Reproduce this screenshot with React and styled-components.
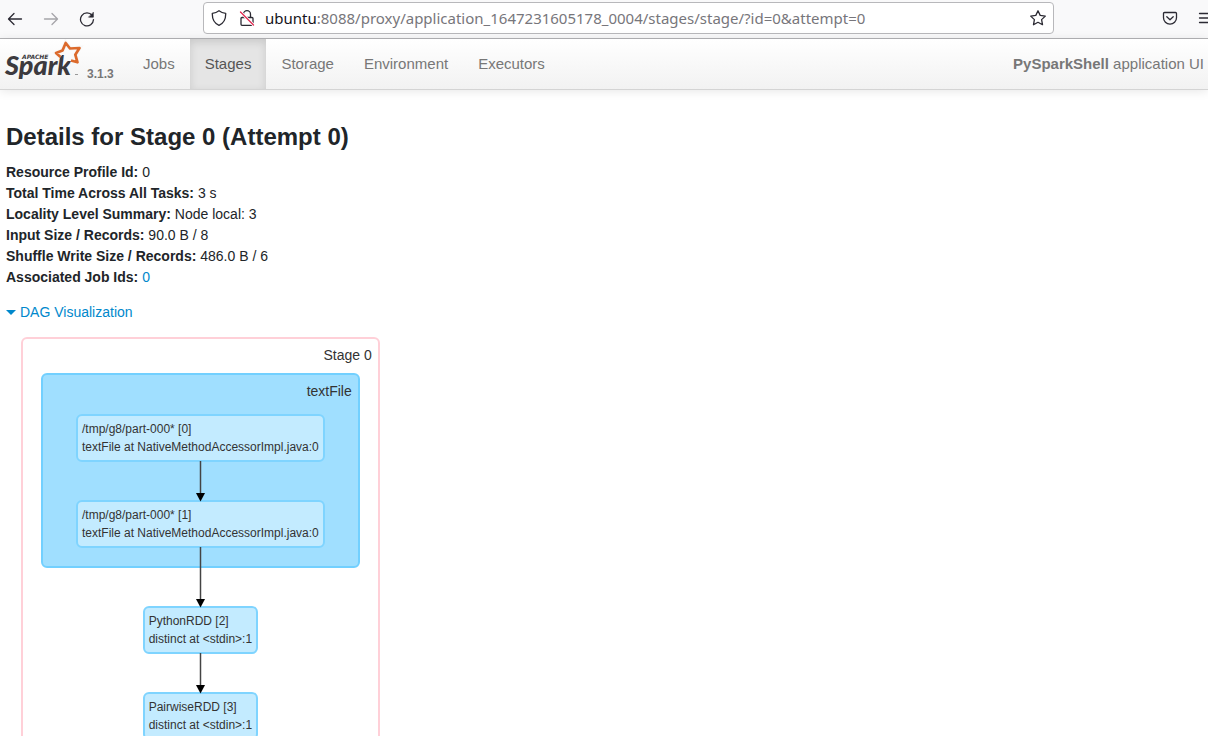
import React from "react";
import styled, { createGlobalStyle, css } from "styled-components";

const GlobalStyle = createGlobalStyle`
  * { box-sizing: border-box; }
  html, body, #root { height: 100%; margin: 0; }
  body {
    background: #fff;
    color: #212529;
    font-family: "Liberation Sans", Arial, sans-serif;
    font-size: 14px;
    line-height: 21px;
  }
`;

const Window = styled.div`
  display: flex;
  flex-direction: column;
  height: 100vh;
`;

/* ---------- browser toolbar ---------- */

const Toolbar = styled.header`
  display: flex;
  flex: none;
  align-items: center;
  height: 39px;
  background: #f9f9fa;
  border-bottom: 1px solid #b4b4b7;
  overflow: hidden;
`;

const ToolGroup = styled.div`
  display: flex;
  align-items: center;
  flex: none;
  gap: ${(p) => p.$gap || 16}px;
`;

const BackForward = styled(ToolGroup)`
  padding-left: 5px;
  width: 203px;
`;

const MenuTools = styled(ToolGroup)`
  width: 154px;
  padding-left: 106px;
`;

const IconButton = styled.button`
  display: flex;
  flex: none;
  align-items: center;
  justify-content: center;
  width: 20px;
  height: 20px;
  padding: 0;
  border: 0;
  background: none;
  color: #2b2a33;
  opacity: ${(p) => (p.disabled ? 0.4 : 1)};
`;

const AddressBar = styled.form`
  display: flex;
  flex: 1;
  align-items: center;
  gap: 8px;
  min-width: 0;
  height: 32px;
  margin-bottom: 2px;
  padding: 0 5px;
  background: #fff;
  border: 1px solid #b8b8bb;
  border-radius: 4px;
`;

const Address = styled.label`
  display: flex;
  flex: 1;
  min-width: 0;
  color: #15141a;
  font-family: "Noto Sans", sans-serif;
  font-size: 15px;
  line-height: 24px;
`;

const AddressInput = styled.input`
  flex: 1;
  min-width: 0;
  padding: 0;
  border: 0;
  outline: 0;
  background: none;
  color: #77767b;
  font: inherit;
`;

/* ---------- Spark navigation ---------- */

const Navbar = styled.nav`
  display: flex;
  flex: none;
  position: relative;
  height: 51px;
  background: linear-gradient(#fff, #f2f2f2);
  border-bottom: 1px solid #d4d4d4;
  box-shadow: 0 1px 10px rgba(0, 0, 0, 0.1);
  font-size: 15px;
`;

const Brand = styled.a`
  display: flex;
  align-items: flex-start;
  gap: 3px;
  width: 128px;
  padding-left: 4px;
  color: #777;
  text-decoration: none;
`;

const Version = styled.span`
  margin-top: 25px;
  font-size: 12px;
  font-weight: bold;
`;

const NavList = styled.ul`
  display: flex;
  margin: 0;
  padding: 0;
  list-style: none;
`;

const NavLink = styled.a`
  display: block;
  height: 50px;
  padding: 0 15px;
  color: #777;
  line-height: 50px;
  text-decoration: none;
  ${(p) =>
    p.$active &&
    css`
      background: #e5e5e5;
      color: #555;
      box-shadow: inset 0 3px 8px rgba(0, 0, 0, 0.125);
    `}
`;

const AppName = styled.p`
  margin: 0 4px 0 auto;
  color: #777;
  line-height: 50px;
  white-space: nowrap;
`;

/* ---------- page ---------- */

const Page = styled.main`
  flex: 1;
  min-height: 0;
  overflow: auto;
  scrollbar-width: none;
  padding: 32px 6px 0;
`;

const Title = styled.h1`
  margin: 0 0 10px;
  font-size: 24px;
  line-height: 30px;
`;

const Summary = styled.ul`
  margin: 0 0 14px;
  padding: 0;
  list-style: none;
`;

const Link = styled.a`
  color: #0088cc;
  text-decoration: none;
`;

const Toggle = styled.button`
  display: flex;
  align-items: center;
  gap: 4px;
  padding: 0;
  border: 0;
  background: none;
  color: #0088cc;
  font: inherit;
`;

const Caret = styled.span`
  border: 5px solid transparent;
  border-top-color: currentColor;
  border-bottom: 0;
`;

/* ---------- DAG ---------- */

const Stage = styled.section`
  display: flex;
  flex-direction: column;
  align-items: center;
  width: max-content;
  margin: 14px 0 16px 15px;
  padding: 6px 18px 20px;
  border: 2px solid #ffd0d8;
  border-radius: 6px;
  color: #333;
`;

const ClusterLabel = styled.h2`
  align-self: flex-end;
  margin: ${(p) => p.$margin};
  font-size: 14px;
  font-weight: normal;
  line-height: 21px;
`;

const Cluster = styled.div`
  display: flex;
  flex-direction: column;
  align-items: center;
  padding: 6px 33px 18px;
  background: #a0dfff;
  border: 2px solid #72d0ff;
  border-radius: 6px;
`;

const Node = styled.div`
  padding: 4px;
  background: #c3ebff;
  border: 2px solid #7fd4ff;
  border-radius: 6px;
  font-size: 12px;
  line-height: 18px;
  white-space: nowrap;
`;

const EdgeSvg = styled.svg`
  display: block;
  position: relative;
  overflow: visible;
  margin-top: -${(p) => p.$overlap || 0}px;
`;

function Edge({ length = 38, overlap = 0 }) {
  return (
    <EdgeSvg width="11" height={length} $overlap={overlap} aria-hidden="true">
      <path d={`M5.5 -1V${length - 4}`} stroke="#444" strokeWidth="1.5" />
      <path d={`M1 ${length - 7}h9l-4.5 8.500z`} fill="#000" />
    </EdgeSvg>
  );
}

function RddNode({ name, call }) {
  return (
    <Node>
      <div>{name}</div>
      <div>{call}</div>
    </Node>
  );
}

/* ---------- icons ---------- */

const Icon = ({ children, size = 16 }) => (
  <svg
    width={size}
    height={size}
    viewBox="0 0 16 16"
    fill="none"
    stroke="currentColor"
    strokeWidth="1.3"
    strokeLinecap="round"
    strokeLinejoin="round"
    aria-hidden="true"
  >
    {children}
  </svg>
);

const SparkLogo = () => (
  <svg width="80" height="44" viewBox="0 0 80 44" role="img" aria-label="Apache Spark">
    <text x="1" y="36" fontFamily="Lato, sans-serif" fontSize="27" fontWeight="900" fontStyle="italic" fill="#3c3a3e">
      Spark
    </text>
    <text x="18" y="20" fontFamily="DejaVu Sans, sans-serif" fontSize="6" fontWeight="700" fontStyle="italic" fill="#3c3a3e">
      APACHE
    </text>
    <path
      d="M56.500 18L52 14L58.500 11.500L61.700 4L66 9.500L75.500 9L71.300 15.700L73.500 23.300L67 21.500"
      fill="none"
      stroke="#f8f8f8"
      strokeWidth="4.500"
    />
    <path
      d="M56.500 18L52 14L58.500 11.500L61.700 4L66 9.500L75.500 9L71.300 15.700L73.500 23.300L67 21.500"
      fill="none"
      stroke="#dc6a2c"
      strokeWidth="2.700"
      strokeLinejoin="round"
    />
    <path d="M71 35.500h3" stroke="#999" />
  </svg>
);

const facts = [
  ["Resource Profile Id:", "0"],
  ["Total Time Across All Tasks:", "3 s"],
  ["Locality Level Summary:", "Node local: 3"],
  ["Input Size / Records:", "90.0 B / 8"],
  ["Shuffle Write Size / Records:", "486.0 B / 6"],
  ["Associated Job Ids:", <Link href="#job-0">0</Link>],
];

const tabs = ["Jobs", "Stages", "Storage", "Environment", "Executors"];

export default function App() {
  return (
    <Window>
      <GlobalStyle />
      <Toolbar>
        <BackForward>
          <IconButton aria-label="Back">
            <Icon>
              <path d="M14.5 8H1.7M7 2.5L1.5 8L7 13.5" />
            </Icon>
          </IconButton>
          <IconButton aria-label="Forward" disabled>
            <Icon>
              <path d="M1.5 8h12.8M9 2.5L14.5 8L9 13.5" />
            </Icon>
          </IconButton>
          <IconButton aria-label="Reload">
            <Icon>
              <path d="M13.2 4.500A6.5 6.5 0 1 0 14.5 8.6" />
              <path d="M14.4 1.5v4.7H9.8z" fill="currentColor" strokeWidth="0.6" />
            </Icon>
          </IconButton>
        </BackForward>
        <AddressBar onSubmit={(e) => e.preventDefault()}>
          <IconButton type="button" aria-label="Tracking protection">
            <Icon>
              <path d="M8 .7C6 2.300 4 3 1.300 3.300C1.100 9 3.300 13.500 8 15.300C12.700 13.500 14.900 9 14.700 3.300C12 3 10 2.300 8 .7z" />
            </Icon>
          </IconButton>
          <IconButton type="button" aria-label="Connection is not secure">
            <Icon>
              <path d="M4.500 7V4.200a3.500 3.500 0 0 1 7 0V7M3 7.500h10a1 1 0 0 1 1 1V14.300a1 1 0 0 1-1 1H3a1 1 0 0 1-1-1V8.500a1 1 0 0 1 1-1z" />
              <path d="M1.500 2L14.500 15" stroke="#fff" strokeWidth="3" />
              <path d="M1.500 2L14.500 15" stroke="#e22850" />
            </Icon>
          </IconButton>
          <Address>
            <span>ubuntu</span>
            <AddressInput
              aria-label="Address"
              defaultValue=":8088/proxy/application_1647231605178_0004/stages/stage/?id=0&attempt=0"
            />
          </Address>
          <IconButton type="button" aria-label="Bookmark this page">
            <Icon>
              <path d="M8 .8l2.200 4.600l5.100.7l-3.700 3.500l.9 5.100L8 12.300l-4.500 2.400l.9-5.100L.7 6.100l5.100-.7z" />
            </Icon>
          </IconButton>
        </AddressBar>
        <MenuTools $gap={16}>
          <IconButton aria-label="Save to Pocket">
            <Icon>
              <path d="M2.500 1.500h11a1 1 0 0 1 1 1v4.200a6.500 6.500 0 0 1-13 0V2.500a1 1 0 0 1 1-1zM4.800 5.700l3.200 3l3.200-3" />
            </Icon>
          </IconButton>
          <IconButton aria-label="Open menu">
            <Icon>
              <path d="M1.500 2.500h13M1.500 7h13M1.500 11.500h13" />
            </Icon>
          </IconButton>
        </MenuTools>
      </Toolbar>

      <Navbar>
        <Brand href="#home">
          <SparkLogo />
          <Version>3.1.3</Version>
        </Brand>
        <NavList>
          {tabs.map((tab) => (
            <li key={tab}>
              <NavLink href={`#${tab.toLowerCase()}`} $active={tab === "Stages"}>
                {tab}
              </NavLink>
            </li>
          ))}
        </NavList>
        <AppName>
          <strong>PySparkShell</strong> application UI
        </AppName>
      </Navbar>

      <Page>
        <Title>Details for Stage 0 (Attempt 0)</Title>
        <Summary>
          {facts.map(([label, value]) => (
            <li key={label}>
              <strong>{label}</strong> {value}
            </li>
          ))}
        </Summary>
        <Toggle aria-expanded="true">
          <Caret />
          DAG Visualization
        </Toggle>
        <Stage>
          <ClusterLabel $margin="0 -12px 7px 0">Stage 0</ClusterLabel>
          <Cluster>
            <ClusterLabel $margin="0 -27px 12px 0">textFile</ClusterLabel>
            <RddNode name="/tmp/g8/part-000* [0]" call="textFile at NativeMethodAccessorImpl.java:0" />
            <Edge />
            <RddNode name="/tmp/g8/part-000* [1]" call="textFile at NativeMethodAccessorImpl.java:0" />
          </Cluster>
          <Edge length={58} overlap={20} />
          <RddNode name="PythonRDD [2]" call="distinct at <stdin>:1" />
          <Edge />
          <RddNode name="PairwiseRDD [3]" call="distinct at <stdin>:1" />
        </Stage>
      </Page>
    </Window>
  );
}
